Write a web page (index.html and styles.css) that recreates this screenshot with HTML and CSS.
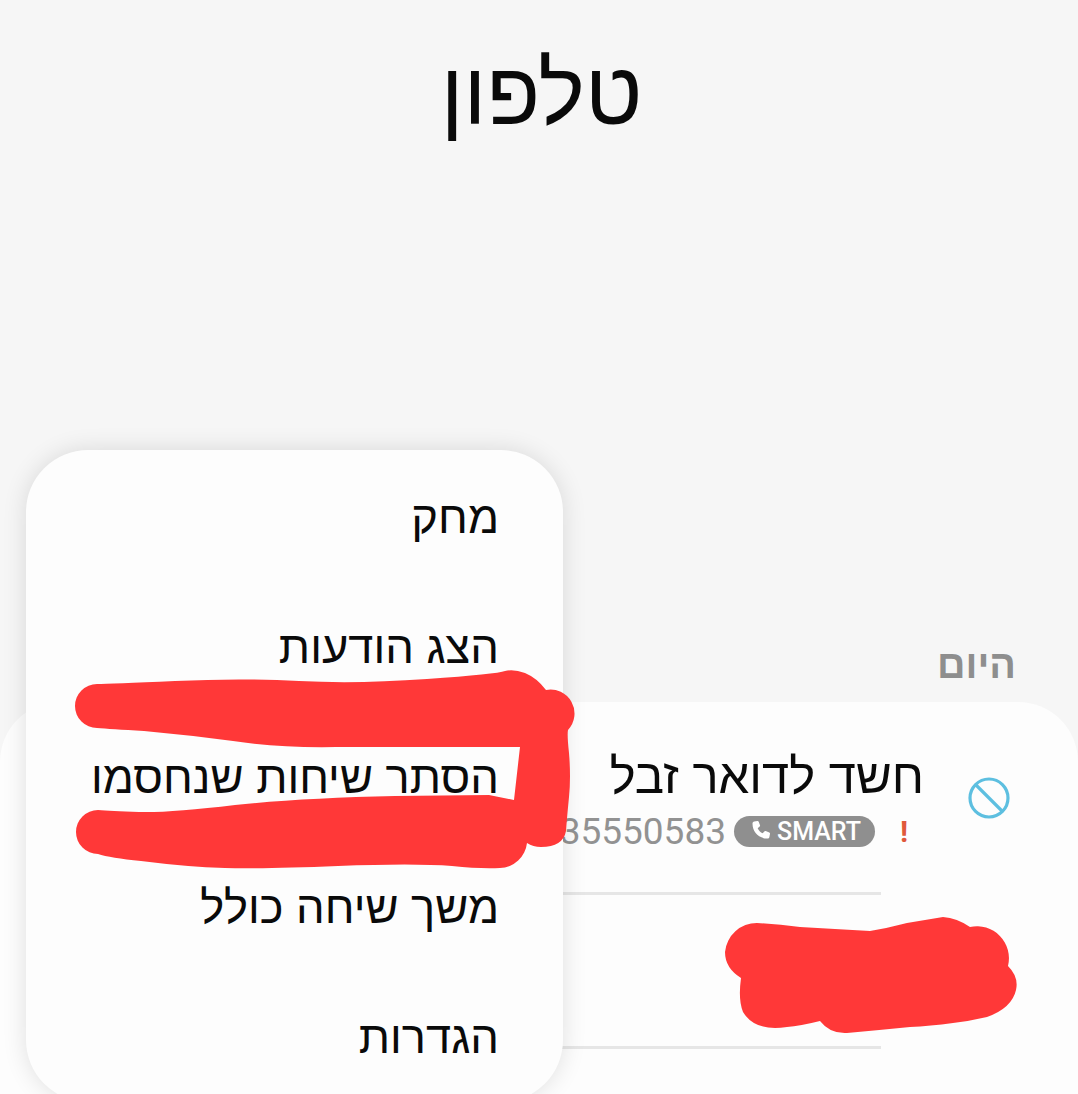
FILE: index.html
```html
<!DOCTYPE html>
<html lang="he" dir="rtl">
<head>
<meta charset="utf-8">
<title>טלפון</title>
<link rel="stylesheet" href="styles.css">
</head>
<body>
<div class="screen">
  <header class="app-header"><h1 class="app-title">טלפון</h1></header>
  <main class="log">
    <h2 class="day-label">היום</h2>
    <section class="card">
      <div class="call-row">
        <svg class="block-icon" viewBox="0 0 42 42" aria-hidden="true">
          <circle cx="21" cy="21" r="19" />
          <line x1="8" y1="8" x2="34" y2="34" />
        </svg>
        <div class="call-text">
          <div class="call-name">חשד לדואר זבל</div>
          <div class="call-meta">
            <span class="alert">!</span>
            <span class="smart-pill" dir="ltr">
              <svg class="phone-icon" viewBox="0 0 24 24" aria-hidden="true"><path d="M6.200 2.600 9.400 2c.6-.1 1.100.2 1.300.7l1.300 3.600c.2.5 0 1-.4 1.300L9.700 9.200c.9 2.200 2.700 4 5 5.100l1.600-1.900c.3-.4.9-.6 1.400-.4l3.600 1.400c.5.2.8.7.7 1.300l-.6 3.200c-.2 1-1 1.600-2 1.600C10.600 19.500 4.500 13.300 4.500 4.600c0-1 .7-1.800 1.700-2z"/></svg>
              SMART
            </span>
            <span class="call-number" dir="ltr">35550583</span>
          </div>
        </div>
      </div>
      <div class="call-row-empty"></div>
    </section>
  </main>

  <nav class="menu">
    <div class="menu-item">מחק</div>
    <div class="menu-item">הצג הודעות</div>
    <div class="menu-item">הסתר שיחות שנחסמו</div>
    <div class="menu-item">משך שיחה כולל</div>
    <div class="menu-item">הגדרות</div>
  </nav>

  <svg class="scribbles" viewBox="0 0 1078 1094" aria-hidden="true">
    <path class="ink" d="M97,728 A22,22 0 0 1 97,684 Q110,684 175,681 Q241,678 299,681 Q357,684 427,679 Q497,674 505,671 Q514,669 525,673 Q537,678 546,690 A24,24 0 0 1 568,730 Q567,735 569,753 Q571,777 569,797 Q567,817 566,831 Q563,847 541,847 Q533,847 527,843 A28,28 0 0 1 500,868 Q480,869 452,866 Q414,863 338,866 Q263,869 225,868 Q188,867 141,861 Q110,858 98,854 A22,22 0 0 1 98,810 Q110,811 139,812 Q169,813 235,805 Q301,798 395,796 L489,795 L514,800 L520,747 L395,747 L336,747 Q278,748 233,741 Q188,735 144,731 Q110,729 97,728 Z"/>
    <path class="ink" d="M741,978 Q725,968 725,952 A32,32 0 0 1 757,923 Q778,924 800,927 Q835,929 870,931 Q888,928 907,923 Q925,920 943,917 Q957,918 970,927 A32,32 0 0 1 1008,966 Q1019,977 1016,990 Q1012,1008 987,1017 Q970,1021 953,1023 Q930,1026 910,1027 Q880,1030 847,1033 Q830,1034 820,1021 Q800,1026 787,1027 Q755,1032 743,1012 Q738,1000 741,978 Z"/>
  </svg>
</div>
</body>
</html>
```
FILE: styles.css
```css
html, body {
  margin: 0;
  padding: 0;
  background: #f6f6f6;
}

.screen {
  position: relative;
  width: 1078px;
  height: 1094px;
  overflow: hidden;
  font-family: "Liberation Sans", "Open Sans", sans-serif;
  color: #0a0a0a;
}

.app-header {
  height: 194px;
  padding: 41px 0 0 5px;
  box-sizing: border-box;
  display: flex;
  justify-content: center;
}

.app-title {
  margin: 0;
  font-size: 88px;
  line-height: 106px;
  font-weight: 400;
}

.log {
  padding-top: 442px;
  display: flex;
  flex-direction: column;
}

.day-label {
  margin: 0;
  padding-right: 62px;
  height: 66px;
  font-size: 39.5px;
  line-height: 56px;
  font-weight: 700;
  color: #8e8e8e;
}

.card {
  background: #fdfdfd;
  border-radius: 60px 60px 0 0;
  height: 392px;
}

.call-row {
  height: 190px;
  box-sizing: border-box;
  padding: 44px 68px 0 0;
  display: flex;
  align-items: flex-start;
  gap: 44px;
}

.block-icon {
  width: 42px;
  height: 42px;
  margin-top: 31px;
  flex: none;
  fill: none;
  stroke: #5dbfe0;
  stroke-width: 3.2;
}

.call-text {
  display: flex;
  flex-direction: column;
}

.call-name {
  font-size: 49px;
  line-height: 60px;
}

.call-meta {
  display: flex;
  align-items: center;
  margin-top: 5px;
  height: 40px;
}

.alert {
  font-family: "Roboto", sans-serif;
  font-size: 30px;
  font-weight: 700;
  color: #e0593b;
  width: 19px;
  margin-right: 5px;
  text-align: left;
}

.smart-pill {
  margin-right: 25px;
  height: 31px;
  width: 141px;
  box-sizing: border-box;
  border-radius: 15.5px;
  background: #8f8f8f;
  color: #fff;
  font-family: "Roboto", sans-serif;
  font-weight: 500;
  font-size: 25px;
  display: flex;
  align-items: center;
  justify-content: center;
  gap: 5px;
}

.phone-icon {
  width: 24px;
  height: 24px;
  fill: #fff;
}

.call-number {
  margin-right: 8px;
  font-family: "Roboto", sans-serif;
  font-size: 37px;
  color: #929292;
}

.call-row-empty {
  height: 157px;
  margin: 0 197px 0 100px;
  border-top: 3px solid #e6e6e6;
  border-bottom: 3px solid #e6e6e6;
  box-sizing: border-box;
}

.menu {
  position: absolute;
  left: 26px;
  top: 450px;
  width: 537px;
  height: 652px;
  box-sizing: border-box;
  padding: 3px 64px 0 0;
  background: #fdfdfd;
  border-radius: 62px;
  box-shadow: 0 0 24px rgba(0, 0, 0, 0.12);
}

.menu-item {
  height: 130px;
  display: flex;
  align-items: center;
  font-size: 45.3px;
}

.scribbles {
  position: absolute;
  inset: 0;
  width: 1078px;
  height: 1094px;
}

.ink {
  fill: #ff3838;
}
```
